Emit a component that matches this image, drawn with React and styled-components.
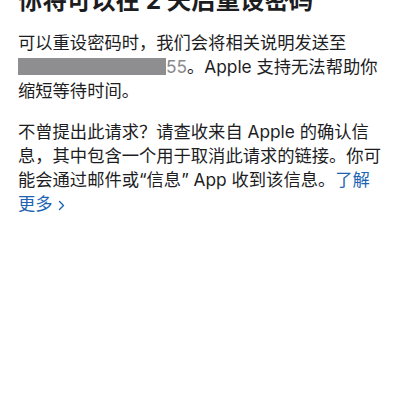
import React from "react";
import styled, { createGlobalStyle } from "styled-components";

const Global = createGlobalStyle`
  html, body { margin: 0; padding: 0; background: #ffffff; }
  body {
    font-family: Inter, "Noto Sans CJK SC", "Noto Sans", sans-serif;
    -webkit-font-smoothing: antialiased;
  }
`;

const Page = styled.div`
  width: 400px;
  height: 400px;
  overflow: hidden;
  box-sizing: border-box;
  padding: 0 18px;
  background: #fff;
  color: #1d1d1f;
`;

const Title = styled.h1`
  margin: -15px 0 0 0;
  font-size: 24.4px;
  line-height: 30px;
  font-weight: 700;
  color: #1d1d1f;
  white-space: nowrap;
`;

const Para = styled.p`
  margin: ${(p) => p.$top || 0}px 0 0 0;
  font-size: 17.3px;
  line-height: 24px;
  font-weight: 400;
  letter-spacing: 0;
`;

const Masked = styled.span`
  white-space: nowrap;
  color: #8a8a8e;
`;

const Bar = styled.span`
  display: inline-block;
  width: 148px;
  height: 17px;
  background: #8e8e90;
  vertical-align: -2px;
`;

const Link = styled.a`
  color: #1c64b4;
  text-decoration: none;
`;

const Chevron = styled.svg`
  width: 7px;
  height: 11px;
  margin-left: 5px;
  vertical-align: -1px;
`;

export default function App() {
  return (
    <>
      <Global />
      <Page>
        <Title>你将可以在 2 天后重设密码</Title>
        <Para $top={16}>
          可以重设密码时，我们会将相关说明发送至
          <Masked>
            <Bar />
            55
          </Masked>
          。Apple 支持无法帮助你缩短等待时间。
        </Para>
        <Para $top={17}>
          不曾提出此请求？请查收来自 Apple 的确认信息，其中包含一个用于取消此请求的链接。你可能会通过邮件或“信息” App 收到该信息。
          <Link href="#">
            了解更多
            <Chevron viewBox="0 0 7 11" fill="none">
              <path d="M1.5 1.5 L5.5 5.5 L1.5 9.5" stroke="#1c64b4" strokeWidth="1.4" strokeLinecap="round" strokeLinejoin="round" />
            </Chevron>
          </Link>
        </Para>
      </Page>
    </>
  );
}
